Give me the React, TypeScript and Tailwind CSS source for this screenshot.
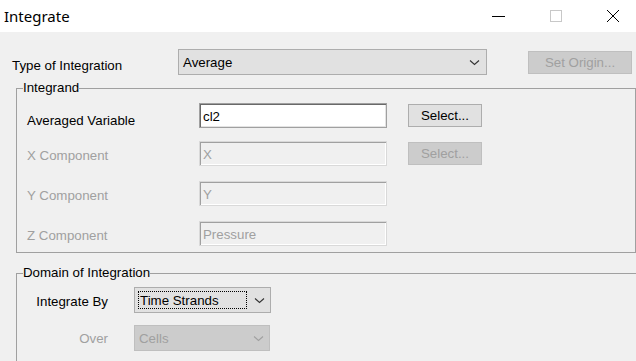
import React from 'react'

const ui = { fontFamily: '"Liberation Sans", Arial, sans-serif' }

function Chevron({ color = '#333' }: { color?: string }) {
  return (
    <svg width="11" height="7" viewBox="0 0 11 7" className="shrink-0">
      <polyline points="1,1.5 5.5,5.5 10,1.5" fill="none" stroke={color} strokeWidth="1.1" />
    </svg>
  )
}

function TextBox({ value, disabled }: { value: string; disabled?: boolean }) {
  return (
    <div
      className={
        disabled
          ? 'w-[188px] h-[25px] flex items-center pl-[3px] pt-[2px] border border-[#d9d9d9] bg-[#f0f0f0] text-[#a0a0a0] shadow-[inset_1px_1px_0_#a0a0a0,inset_-1px_-1px_0_#ffffff]'
          : 'w-[188px] h-[25px] flex items-center pl-[3px] pt-[2px] border border-[#a0a0a0] bg-white text-black shadow-[inset_1px_1px_0_#696969,inset_-1px_-1px_0_#e3e3e3]'
      }
    >
      {value}
    </div>
  )
}

function Button({ label, disabled, w }: { label: string; disabled?: boolean; w: string }) {
  return (
    <div
      className={`${w} h-[23px] flex items-center justify-center pt-[1px] border ${
        disabled ? 'border-[#bfbfbf] bg-[#cccccc] text-[#a0a0a0]' : 'border-[#adadad] bg-[#e1e1e1] text-black'
      }`}
    >
      {label}
    </div>
  )
}

export default function App() {
  return (
    <div className="w-[636px] h-[361px] flex flex-col overflow-hidden bg-[#f0f0f0] text-[13.3px] leading-none" style={ui}>
      {/* title bar */}
      <div className="h-[32px] shrink-0 bg-white flex items-center">
        <span className="pl-[4px] text-[15px] text-black" style={{ fontFamily: '"Noto Sans", "Open Sans", sans-serif' }}>
          Integrate
        </span>
        <div className="ml-auto flex items-center">
          <svg width="14" height="14" viewBox="0 0 14 14" className="mr-[43px]">
            <line x1="0" y1="7.5" x2="13" y2="7.5" stroke="#000" strokeWidth="1" />
          </svg>
          <svg width="14" height="14" viewBox="0 0 14 14" className="mr-[43px]">
            <rect x="1.5" y="1.5" width="11" height="11" fill="none" stroke="#c8c8c8" strokeWidth="1" />
          </svg>
          <svg width="14" height="14" viewBox="0 0 14 14" className="mr-[16px]">
            <path d="M1 1 L13 13 M13 1 L1 13" stroke="#000" strokeWidth="1" />
          </svg>
        </div>
      </div>

      {/* body */}
      <div className="flex-1 flex flex-col">
        <div className="mt-[17px] h-[26px] flex items-center">
          <span className="pl-[12px] w-[178px] pt-[8px]">Type of Integration</span>
          <div className="w-[309px] h-[26px] flex items-center justify-between pl-[4px] pr-[6px] pt-[1px] border border-[#adadad] bg-[#e1e1e1]">
            <span>Average</span>
            <Chevron />
          </div>
          <div className="ml-[41px]">
            <Button label="Set Origin..." disabled w="w-[104px]" />
          </div>
        </div>

        <fieldset className="mt-[5px] ml-[16px] w-[620px] h-[173px] border border-[#a0a0a0] px-0">
          <legend className="ml-[6px] h-[16px] leading-[16px]">Integrand</legend>
          <div className="flex flex-col pl-[10px]">
            <div className="mt-[7px] h-[25px] flex items-center">
              <span className="w-[172px] pt-[10px]">Averaged Variable</span>
              <TextBox value="cl2" />
              <div className="ml-[21px]">
                <Button label="Select..." w="w-[74px]" />
              </div>
            </div>
            <div className="mt-[13px] h-[25px] flex items-center text-[#a0a0a0]">
              <span className="w-[172px] pt-[5px]">X Component</span>
              <TextBox value="X" disabled />
              <div className="ml-[21px]">
                <Button label="Select..." disabled w="w-[74px]" />
              </div>
            </div>
            <div className="mt-[15px] h-[25px] flex items-center text-[#a0a0a0]">
              <span className="w-[172px] pt-[5px]">Y Component</span>
              <TextBox value="Y" disabled />
            </div>
            <div className="mt-[15px] h-[25px] flex items-center text-[#a0a0a0]">
              <span className="w-[172px] pt-[4px]">Z Component</span>
              <TextBox value="Pressure" disabled />
            </div>
          </div>
        </fieldset>

        <fieldset className="mt-[12px] ml-[16px] w-[640px] h-[120px] border border-[#a0a0a0] px-0 shrink-0">
          <legend className="ml-[6px] h-[16px] leading-[16px]">Domain of Integration</legend>
          <div className="flex flex-col">
            <div className="mt-[6px] h-[26px] flex items-center">
              <span className="w-[91px] text-right pt-[3px]">Integrate By</span>
              <div className="ml-[26px] w-[137px] h-[26px] flex items-center border border-[#adadad] bg-[#e1e1e1] pl-[3px] pr-[5px]">
                <span className="w-[109px] h-[18px] flex items-center pl-[1px] pt-[1px] border border-dotted border-black">
                  Time Strands
                </span>
                <span className="ml-auto">
                  <Chevron />
                </span>
              </div>
            </div>
            <div className="mt-[12px] h-[26px] flex items-center text-[#a0a0a0]">
              <span className="w-[91px] text-right pt-[2px]">Over</span>
              <div className="ml-[26px] w-[136px] h-[26px] flex items-center justify-between border border-[#bfbfbf] bg-[#cccccc] pl-[4px] pr-[5px] pt-[1px]">
                <span>Cells</span>
                <Chevron color="#a0a0a0" />
              </div>
            </div>
          </div>
        </fieldset>
      </div>
    </div>
  )
}
